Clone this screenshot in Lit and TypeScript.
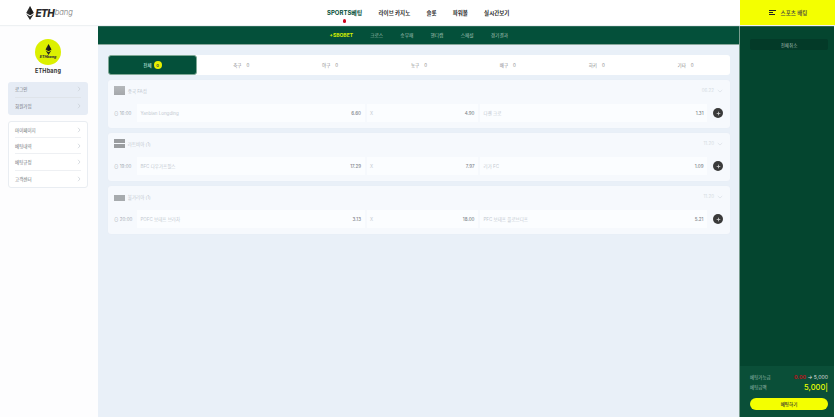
import { LitElement, html, css, svg } from "lit";
import { customElement } from "lit/decorators.js";

const eth = (w: number, h: number, c: string) => html`<svg width=${w} height=${h} viewBox="0 0 16 26">
  ${svg`<path d="M8 0 L1 13 L8 17.4 L15 13 Z" fill=${c}/><path d="M1 15 L8 26 L15 15 L8 19.4 Z" fill=${c}/><path d="M8 0 L8 17.4 L15 13 Z" fill="#000" opacity=".35"/>`}
</svg>`;

const chev = html`<svg class="chev" width="4" height="6" viewBox="0 0 4 6"><path d="M1 .8 L3 3 L1 5.2" fill="none" stroke="#c8ced5" stroke-width=".7"/></svg>`;
const down = html`<svg width="6" height="4" viewBox="0 0 6 4"><path d="M.8 1 L3 3 L5.2 1" fill="none" stroke="#d5dbe2" stroke-width=".6"/></svg>`;
const plus = html`<svg width="5" height="5" viewBox="0 0 5 5"><path d="M2.5 .7 V4.3 M.7 2.5 H4.3" stroke="#d0d0d0" stroke-width=".8" fill="none"/></svg>`;

interface Card {
  league: string; flag: string; date: string; time: string;
  home: string; h: string; d: string; away: string; a: string;
}
const cards: Card[] = [
  { league: "중국 FA컵", flag: "f1", date: "06.22", time: "16:00", home: "Yanbian Longding", h: "6.60", d: "4.90", away: "다롄 크로", a: "1.31" },
  { league: "라트비아 (1)", flag: "f2", date: "11.20", time: "19:00", home: "BFC 다우가프필스", h: "17.29", d: "7.97", away: "리가 FC", a: "1.09" },
  { league: "불가리아 (1)", flag: "f3", date: "11.20", time: "20:00", home: "POFC 보테프 브라차", h: "3.13", d: "18.00", away: "PFC 보테프 플로브디프", a: "5.21" },
];
const tabs = ["축구", "야구", "농구", "배구", "하키", "기타"];

@customElement("app-root")
export class AppRoot extends LitElement {
  static styles = css`
    :host { display: block; width: 835px; height: 417px; overflow: hidden; font-family: Inter, "Noto Sans CJK KR", sans-serif; color: #333; }
    .top { display: flex; height: 25px; background: #fff; box-shadow: 0 1px 1px #eef1f3; position: relative; }
    .logo { width: 300px; display: flex; align-items: center; padding-left: 25px; box-sizing: border-box; }
    .logo svg { margin-right: 0.5px; }
    .logo b { font-size: 10px; font-weight: 800; font-style: italic; color: #2a2a2a; letter-spacing: -.6px; }
    .logo i { font-size: 7.6px; font-weight: 300; color: #777; margin-left: .5px; }
    .nav { width: 440px; display: flex; padding-left: 27px; gap: 16.2px; align-items: center; box-sizing: border-box; font-size: 5.5px; font-weight: 700; color: #2a2a2a; }
    .nav span { position: relative; white-space: nowrap; }
    .nav .on { color: #06503a; font-size: 6px; }
    .nav .on::after { content: ""; position: absolute; left: 50%; margin-left: -2px; top: 11px; width: 3.5px; height: 3.5px; border-radius: 50%; background: #d0021b; }
    .bet-head { width: 95px; background: #f4ff00; display: flex; align-items: center; justify-content: center; gap: 5px; font-size: 5.5px; color: #444; font-weight: 500; padding-left: 1px; box-sizing: border-box; }
    .bars { display: flex; flex-direction: column; gap: 1.3px; }
    .bars i { display: block; height: 1px; background: #222; }
    .bars i:nth-child(1) { width: 7px; } .bars i:nth-child(2) { width: 4.5px; } .bars i:nth-child(3) { width: 6px; }

    .body { display: flex; height: 392px; }
    .side { width: 97.5px; flex: none; background: #fdfdfe; padding: 14px 9.5px 0 8px; box-sizing: border-box; display: flex; flex-direction: column; align-items: stretch; }
    .badge { align-self: center; width: 26px; height: 26px; border-radius: 50%; background: #dcf000; display: flex; flex-direction: column; align-items: center; justify-content: center; line-height: 1; }
    .badge em { font-size: 3.6px; font-style: italic; font-weight: 800; color: #333; margin-top: 1px; }
    .name { text-align: center; font-size: 5.5px; font-weight: 700; color: #333; margin: 2px 0 6.5px; line-height: 8px; letter-spacing: .2px; }
    .box { border-radius: 3px; padding: 0 7px; margin-bottom: 6.5px; font-size: 4.5px; color: #6c7178; }
    .box.a { background: #e6ecf5; }
    .box.b { background: #fff; border: 1px solid #e9edf2; padding: 0 6px; }
    .box div { display: flex; justify-content: space-between; align-items: center; border-bottom: 1px solid #dfe4ea; box-sizing: border-box; }
    .box.a div { height: 16.5px; }
    .box.b div { height: 16.2px; border-color: #eef0f3; }
    .box div:last-child { border-bottom: 0; }

    .main { width: 642.5px; flex: none; background: #e9f0f8; }
    .sub { height: 20px; background: #04503a; border-top: 1px solid #8aa89c; border-bottom: 1px solid #8aa89c; display: flex; align-items: center; padding-left: 232px; gap: 17.2px; font-size: 4.7px; color: #a9c4b8; box-sizing: border-box; }
    .sub .on { color: #d9f000; font-weight: 700; font-size: 5px; }
    .content { padding: 10px 10px 0 10.5px; display: flex; flex-direction: column; gap: 5px; }
    .tabs { display: grid; grid-template-columns: repeat(7, 1fr); height: 20px; background: #fff; border-radius: 3px; font-size: 4.5px; color: #888; }
    .tab { display: flex; align-items: center; justify-content: center; gap: 5px; }
    .tab.on { background: #04503a; color: #dfe; border-radius: 3px; border: 0.5px solid #7fa896; gap: 2px; box-sizing: border-box; }
    .tab.on b { background: #e8f000; color: #444; border-radius: 50%; width: 8px; height: 8px; display: flex; align-items: center; justify-content: center; font-size: 4px; }
    .card { background: #f6f9fd; border-radius: 3px; height: 48px; box-sizing: border-box; box-shadow: 0 0 1px #e2e8f0; }
    .ch { height: 24px; display: flex; align-items: center; padding: 0 7px 3px 6px; font-size: 4.5px; color: #c2c8d0; gap: 1.5px; box-sizing: border-box; }
    .ch .lg { flex: 1; }
    .date { display: flex; align-items: center; gap: 3px; color: #d5dbe2; }
    .flag { width: 11px; height: 9px; background: #aeb2b6; }
    .flag.f1 { background: linear-gradient(#b5b8bb, #a5a8ab); }
    .flag.f2 { background: linear-gradient(#9a9da0 0 42%, #f6f9fd 42% 56%, #9a9da0 56%); }
    .flag.f3 { height: 6px; margin-top: 2px; background: #a7abae; }
    .row { height: 18px; display: flex; align-items: center; font-size: 4.5px; color: #c2c8d0; padding-left: 6px; }
    .time { width: 23px; color: #a4abb3; flex: none; }
    .cell { height: 18px; background: #fbfdff; display: flex; align-items: center; justify-content: space-between; padding: 0 3.5px; box-sizing: border-box; margin-right: 2px; }
    .cell b { color: #80858b; font-weight: 500; }
    .c1 { width: 227.5px; } .c2 { width: 111.5px; } .c3 { width: 227px; margin-right: 0; }
    .plus { width: 10px; height: 10px; border-radius: 50%; background: #3a3a3a; margin-left: 6px; display: flex; align-items: center; justify-content: center; }

    .right { width: 95px; flex: none; background: #04452f; border-left: 1px solid #7a9d8f; margin-left: -1px; display: flex; flex-direction: column; box-sizing: border-box; font-size: 4.5px; color: #9fbcb0; }
    .cancel { height: 11px; background: #033a28; border-radius: 2px; display: flex; align-items: center; justify-content: center; margin: 14px 6px auto 10px; color: #a5bdb3; }
    .sum { background: #0a4f38; height: 51px; padding: 6px 6px 0 10px; box-sizing: border-box; }
    .line { display: flex; justify-content: space-between; align-items: center; height: 10px; }
    .line .v { color: #ddd; font-size: 5.2px; }
    .line .v u { color: #c0101b; text-decoration: none; font-weight: 700; }
    .line .big { color: #e8ff00; font-size: 7.6px; font-weight: 500; }
    .betbtn { height: 11.5px; margin-top: 6px; background: #f4ff00; border-radius: 6px; color: #333; display: flex; align-items: center; justify-content: center; font-size: 4.5px; font-weight: 500; }
  `;

  render() {
    return html`
      <div class="top">
        <div class="logo">${eth(10, 14, "#2a2a2a")}<b>ETH</b><i>bang</i></div>
        <div class="nav">
          <span class="on">SPORTS베팅</span><span>라이브 카지노</span><span>슬롯</span><span>파워볼</span><span>실시간보기</span>
        </div>
        <div class="bet-head"><div class="bars"><i></i><i></i><i></i></div>스포츠 배팅</div>
      </div>
      <div class="body">
        <aside class="side">
          <div class="badge">${eth(7, 11, "#222")}<em>ETHbang</em></div>
          <div class="name">ETHbang</div>
          <div class="box a"><div>로그인${chev}</div><div>회원가입${chev}</div></div>
          <div class="box b"><div>마이페이지${chev}</div><div>베팅내역${chev}</div><div>베팅규정${chev}</div><div>고객센터${chev}</div></div>
        </aside>
        <main class="main">
          <div class="sub"><span class="on">+SBOBET</span><span>크로스</span><span>승무패</span><span>핸디캡</span><span>스페셜</span><span>경기결과</span></div>
          <div class="content">
            <div class="tabs">
              <div class="tab on">전체 <b>0</b></div>
              ${tabs.map((t) => html`<div class="tab">${t} <span>0</span></div>`)}
            </div>
            ${cards.map((c) => html`
              <section class="card">
                <div class="ch"><div class="flag ${c.flag}"></div><span class="lg">&nbsp;${c.league}</span><span class="date">${c.date} ${down}</span></div>
                <div class="row">
                  <span class="time">⊙ ${c.time}</span>
                  <div class="cell c1"><span>${c.home}</span><b>${c.h}</b></div>
                  <div class="cell c2"><span>X</span><b>${c.d}</b></div>
                  <div class="cell c3"><span>${c.away}</span><b>${c.a}</b></div>
                  <div class="plus">${plus}</div>
                </div>
              </section>`)}
          </div>
        </main>
        <aside class="right">
          <div class="cancel">전체취소</div>
          <div class="sum">
            <div class="line"><span>베팅가능금</span><span class="v"><u>0.00</u> → 5,000</span></div>
            <div class="line"><span>베팅금액</span><span class="big">5,000|</span></div>
            <div class="betbtn">베팅하기</div>
          </div>
        </aside>
      </div>
    `;
  }
}
